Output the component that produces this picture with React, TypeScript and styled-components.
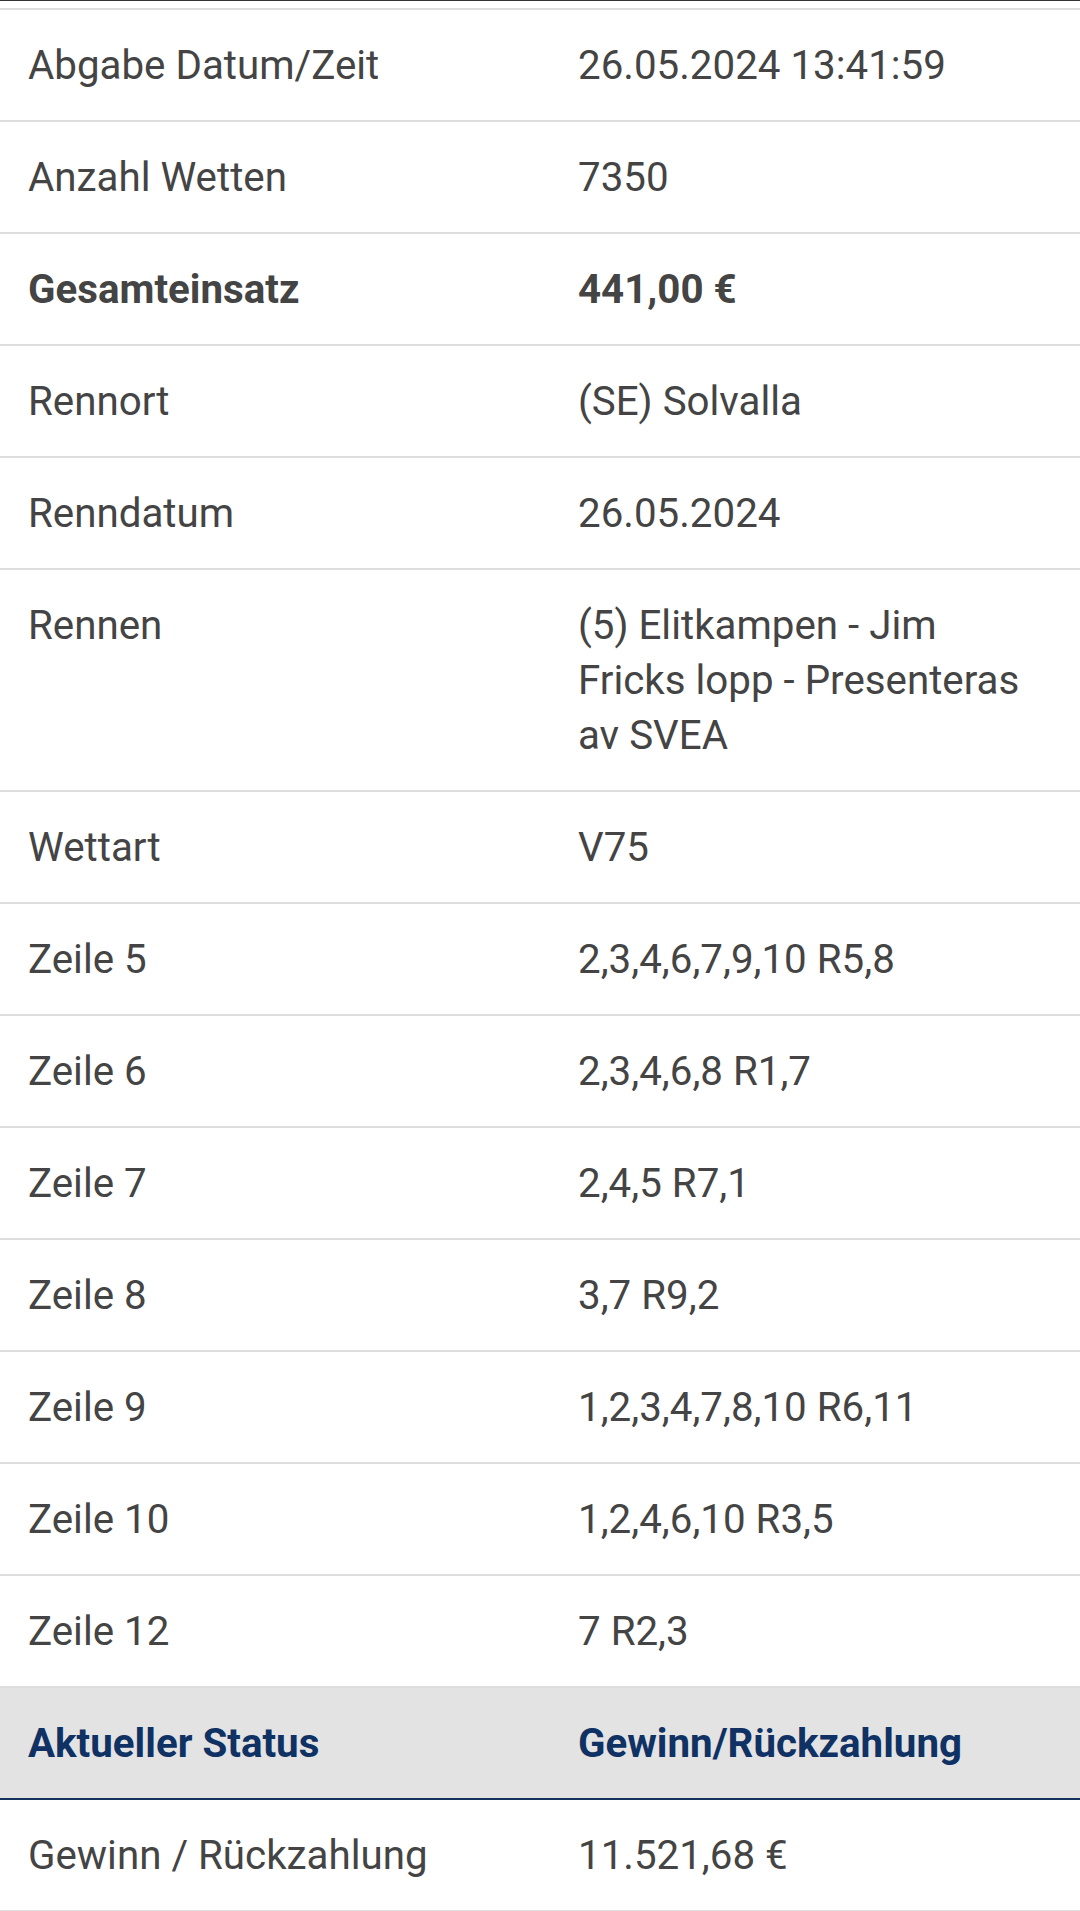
import React from "react";
import styled, { createGlobalStyle } from "styled-components";

const GlobalStyle = createGlobalStyle`
  body {
    margin: 0;
    background: #ffffff;
    font-family: Roboto, "Noto Sans", "Liberation Sans", sans-serif;
  }
`;

const Page = styled.div`
  width: 1080px;
  border-top: 1px solid #333333;
  padding-top: 7px;
`;

const Table = styled.div`
  border-top: 2px solid #dddddd;
`;

const Row = styled.div<{ $head?: boolean }>`
  display: grid;
  grid-template-columns: 550px 1fr;
  align-items: start;
  background: ${(p) => (p.$head ? "#e3e3e3" : "#ffffff")};
  border-bottom: 2px solid ${(p) => (p.$head ? "#15325f" : "#dddddd")};
`;

const Cell = styled.div<{ $bold?: boolean; $head?: boolean }>`
  padding: 28px 36px 27px 28px;
  font-size: 40.3px;
  line-height: 55px;
  font-weight: ${(p) => (p.$bold || p.$head ? 700 : 400)};
  color: ${(p) => (p.$head ? "#0f3163" : "#444444")};
`;

interface Item {
  label: string;
  value: string;
  bold?: boolean;
}

const items: Item[] = [
  { label: "Abgabe Datum/Zeit", value: "26.05.2024 13:41:59" },
  { label: "Anzahl Wetten", value: "7350" },
  { label: "Gesamteinsatz", value: "441,00 €", bold: true },
  { label: "Rennort", value: "(SE) Solvalla" },
  { label: "Renndatum", value: "26.05.2024" },
  {
    label: "Rennen",
    value: "(5) Elitkampen - Jim Fricks lopp - Presenteras av SVEA",
  },
  { label: "Wettart", value: "V75" },
  { label: "Zeile 5", value: "2,3,4,6,7,9,10 R5,8" },
  { label: "Zeile 6", value: "2,3,4,6,8 R1,7" },
  { label: "Zeile 7", value: "2,4,5 R7,1" },
  { label: "Zeile 8", value: "3,7 R9,2" },
  { label: "Zeile 9", value: "1,2,3,4,7,8,10 R6,11" },
  { label: "Zeile 10", value: "1,2,4,6,10 R3,5" },
  { label: "Zeile 12", value: "7 R2,3" },
];

export default function App() {
  return (
    <Page>
      <GlobalStyle />
      <Table>
        {items.map((item) => (
          <Row key={item.label}>
            <Cell $bold={item.bold}>{item.label}</Cell>
            <Cell $bold={item.bold}>{item.value}</Cell>
          </Row>
        ))}
        <Row $head>
          <Cell $head>Aktueller Status</Cell>
          <Cell $head>Gewinn/Rückzahlung</Cell>
        </Row>
        <Row>
          <Cell>Gewinn / Rückzahlung</Cell>
          <Cell>11.521,68 €</Cell>
        </Row>
      </Table>
    </Page>
  );
}
